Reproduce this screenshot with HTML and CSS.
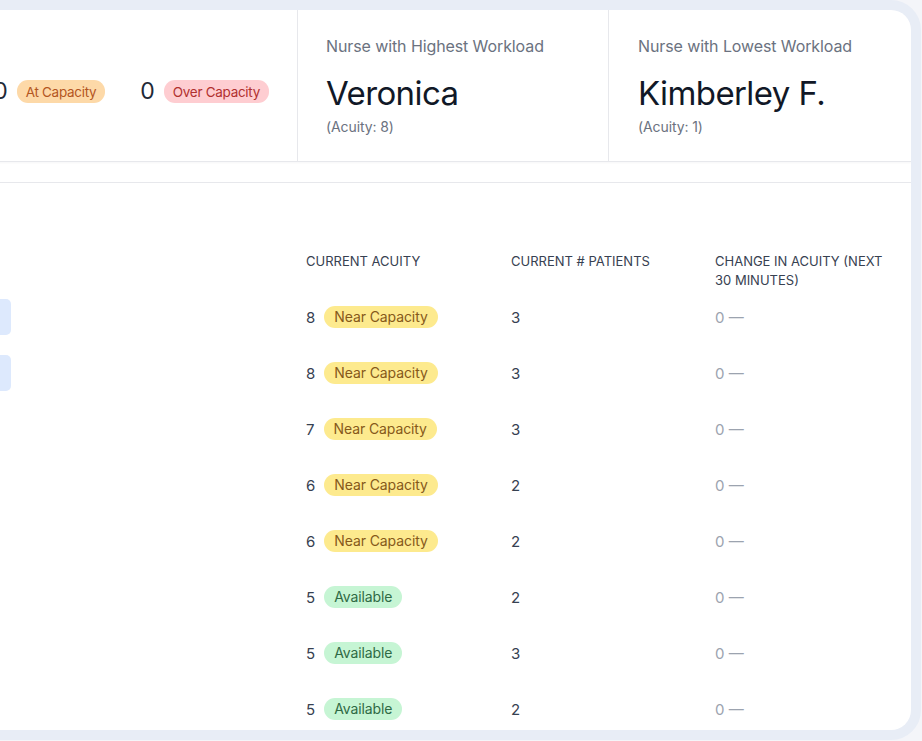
FILE: index.html
```html
<!DOCTYPE html>
<html lang="en">
<head>
<meta charset="utf-8">
<title>Nurse Workload</title>
<link rel="stylesheet" href="styles.css">
</head>
<body>
<div class="frame">
  <div class="card">
    <div class="stats">
      <div class="stat stat-summary">
        <div class="cap-item"><span class="big">0</span><span class="badge b-at">At Capacity</span></div>
        <div class="cap-item"><span class="big">0</span><span class="badge b-over">Over Capacity</span></div>
      </div>
      <div class="stat stat-nurse">
        <div class="stat-label">Nurse with Highest Workload</div>
        <div class="stat-name">Veronica</div>
        <div class="stat-sub">(Acuity: 8)</div>
      </div>
      <div class="stat stat-nurse stat-last">
        <div class="stat-label">Nurse with Lowest Workload</div>
        <div class="stat-name">Kimberley F.</div>
        <div class="stat-sub">(Acuity: 1)</div>
      </div>
    </div>

    <div class="table">
      <div class="row head">
        <div class="cell"></div>
        <div class="cell">CURRENT ACUITY</div>
        <div class="cell">CURRENT # PATIENTS</div>
        <div class="cell head-wrap">CHANGE IN ACUITY (NEXT 30 MINUTES)</div>
      </div>

      <div class="row">
        <div class="cell c-name"><span class="chip"></span></div>
        <div class="cell c-acuity"><span class="num">8</span><span class="badge b-near">Near Capacity</span></div>
        <div class="cell num">3</div>
        <div class="cell change">0 —</div>
      </div>
      <div class="row">
        <div class="cell c-name"><span class="chip"></span></div>
        <div class="cell c-acuity"><span class="num">8</span><span class="badge b-near">Near Capacity</span></div>
        <div class="cell num">3</div>
        <div class="cell change">0 —</div>
      </div>
      <div class="row">
        <div class="cell c-name"></div>
        <div class="cell c-acuity"><span class="num">7</span><span class="badge b-near">Near Capacity</span></div>
        <div class="cell num">3</div>
        <div class="cell change">0 —</div>
      </div>
      <div class="row">
        <div class="cell c-name"></div>
        <div class="cell c-acuity"><span class="num">6</span><span class="badge b-near">Near Capacity</span></div>
        <div class="cell num">2</div>
        <div class="cell change">0 —</div>
      </div>
      <div class="row">
        <div class="cell c-name"></div>
        <div class="cell c-acuity"><span class="num">6</span><span class="badge b-near">Near Capacity</span></div>
        <div class="cell num">2</div>
        <div class="cell change">0 —</div>
      </div>
      <div class="row">
        <div class="cell c-name"></div>
        <div class="cell c-acuity"><span class="num">5</span><span class="badge b-avail">Available</span></div>
        <div class="cell num">2</div>
        <div class="cell change">0 —</div>
      </div>
      <div class="row">
        <div class="cell c-name"></div>
        <div class="cell c-acuity"><span class="num">5</span><span class="badge b-avail">Available</span></div>
        <div class="cell num">3</div>
        <div class="cell change">0 —</div>
      </div>
      <div class="row">
        <div class="cell c-name"></div>
        <div class="cell c-acuity"><span class="num">5</span><span class="badge b-avail">Available</span></div>
        <div class="cell num">2</div>
        <div class="cell change">0 —</div>
      </div>
    </div>
  </div>
</div>
</body>
</html>
```

FILE: styles.css
```css
* { box-sizing: border-box; }

html, body {
  margin: 0;
  padding: 0;
  width: 922px;
  height: 741px;
  overflow: hidden;
  background: #f4f5f9;
  font-family: "Inter", "Liberation Sans", sans-serif;
  color: #111827;
}

.frame {
  margin-left: -200px;
  width: 1121px;
  height: 740px;
  border: 10px solid #e8edf6;
  border-radius: 30px;
  background: #e8edf6;
}

.card {
  width: 100%;
  height: 100%;
  background: #ffffff;
  border-radius: 20px;
  overflow: hidden;
}

/* ---------- stats row ---------- */
.stats {
  display: flex;
  height: 152px;
  border-bottom: 1px solid #e7e8ec;
  box-shadow: 0 1px 2px rgba(17, 24, 39, 0.04);
}

.stat-summary {
  flex: 1;
  display: flex;
  justify-content: flex-end;
  align-items: flex-start;
  gap: 35px;
  padding: 70px 28px 0 0;
  overflow: hidden;
}

.cap-item {
  display: flex;
  align-items: center;
  gap: 9px;
  flex-shrink: 0;
}

.big {
  font-size: 23px;
  line-height: 23px;
  color: #1f2937;
}

.stat-nurse {
  width: 311px;
  border-left: 1px solid #e7e8ec;
  padding: 26px 0 0 28px;
}

.stat-last {
  width: 303px;
  padding-left: 29px;
}

.stat-label {
  font-size: 16px;
  line-height: 20px;
  color: #6b7280;
  letter-spacing: -0.1px;
}

.stat-name {
  margin-top: 17px;
  font-size: 33px;
  line-height: 40px;
  font-weight: 400;
  letter-spacing: -0.6px;
  color: #111827;
}

.stat-sub {
  margin-top: 4px;
  font-size: 14px;
  line-height: 20px;
  color: #6b7280;
  letter-spacing: -0.1px;
}

/* ---------- badges ---------- */
.badge {
  display: inline-flex;
  align-items: center;
  height: 22px;
  padding: 0 10px;
  border-radius: 11px;
  font-size: 14px;
  line-height: 22px;
  white-space: nowrap;
  letter-spacing: -0.1px;
}

.stat-summary .badge {
  height: 23px;
  font-size: 13.5px;
  padding: 0 9px;
  letter-spacing: -0.3px;
}

.b-near  { background: #fdea8e; color: #86591a; }
.b-avail { background: #c6f5d4; color: #2f6a45; }
.b-at    { background: #fdd9a8; color: #b4561f; }
.b-over  { background: #fecdd1; color: #b1302f; }

/* ---------- table ---------- */
.table {
  margin-top: 20px;
  border-top: 1px solid #e7e8ec;
  padding: 69px 24px 0 0;
}

.row {
  display: grid;
  grid-template-columns: 1fr 205px 204px 172px;
  height: 56px;
  align-items: center;
}

.row.head {
  height: 37px;
  align-items: start;
  font-size: 13px;
  line-height: 19px;
  color: #374151;
  letter-spacing: 0;
}

.head-wrap {
  max-width: 172px;
}

.cell {
  display: flex;
  align-items: center;
}

.row.head .cell {
  display: block;
}

.c-name {
  justify-content: flex-end;
  padding-right: 295px;
}

.chip {
  display: block;
  width: 120px;
  height: 36px;
  border-radius: 5px;
  background: #dde9fd;
}

.c-acuity {
  gap: 9px;
}

.num {
  font-size: 15px;
  color: #374151;
}

.change {
  font-size: 15px;
  color: #9ca3af;
}
```
